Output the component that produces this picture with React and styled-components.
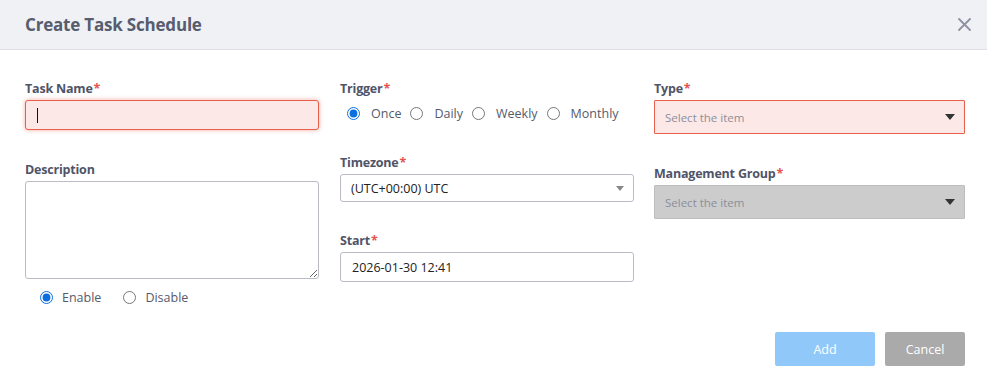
import React from "react";
import styled, { createGlobalStyle } from "styled-components";

const GlobalStyle = createGlobalStyle`
  html, body {
    margin: 0;
    padding: 0;
    background: #ffffff;
  }
  body {
    font-family: "Open Sans", "Noto Sans", "Liberation Sans", sans-serif;
    color: #333;
  }
`;

const Dialog = styled.div`
  width: 987px;
  height: 380px;
  background: #fff;
  display: flex;
  flex-direction: column;
`;

const Header = styled.div`
  height: 50px;
  box-sizing: border-box;
  padding: 0 15px 0 25px;
  background: #eff1f5;
  border-bottom: 1px solid #dfe1e6;
  display: flex;
  align-items: center;
  justify-content: space-between;
`;

const Title = styled.h2`
  margin: 0;
  font-size: 17px;
  font-weight: 700;
  color: #575c6e;
  letter-spacing: -0.2px;
`;

const CloseButton = styled.button`
  border: 0;
  background: none;
  padding: 0;
  width: 16px;
  height: 16px;
  display: flex;
  align-items: center;
  justify-content: center;
  cursor: pointer;
`;

const Body = styled.div`
  padding: 31px 22px 0 25px;
  display: grid;
  grid-template-columns: 315px 314px 311px;
  align-items: start;
`;

const Column = styled.div`
  display: flex;
  flex-direction: column;
  padding-right: ${(p) => p.$pr || 0}px;
`;

const Label = styled.label`
  display: block;
  font-size: 12.5px;
  line-height: 16px;
  font-weight: 700;
  color: #4f5468;
  margin-top: ${(p) => p.$mt || 0}px;
  margin-bottom: 3px;
  letter-spacing: -0.2px;
`;

const Req = styled.span`
  color: #e5534b;
  margin-left: 1px;
`;

const TextBox = styled.div`
  box-sizing: border-box;
  height: ${(p) => p.$h}px;
  border: 1px solid ${(p) => (p.$invalid ? "#e8604c" : "#b9bcc4")};
  border-radius: 3px;
  background: ${(p) => (p.$invalid ? "#fde8e8" : "#fff")};
  box-shadow: ${(p) => (p.$invalid ? "0 0 4px rgba(232, 96, 76, 0.55)" : "none")};
  padding: 0 11px;
  display: flex;
  align-items: center;
  font-size: 12.5px;
  color: #222;
`;

const Caret = styled.span`
  width: 1px;
  height: 15px;
  background: #111;
`;

const TextArea = styled.textarea`
  box-sizing: border-box;
  width: 100%;
  height: 98px;
  border: 1px solid #b9bcc4;
  border-radius: 3px;
  margin: 0;
  font-family: inherit;
  display: block;
`;

const SelectBox = styled.div`
  box-sizing: border-box;
  height: ${(p) => p.$h}px;
  border: 1px solid ${(p) => p.$border};
  border-radius: ${(p) => p.$radius}px;
  background: ${(p) => p.$bg};
  padding: 0 9px 0 10px;
  display: flex;
  align-items: center;
  justify-content: space-between;
  font-size: ${(p) => (p.$placeholder ? "11.5px" : "12.5px")};
  color: ${(p) => (p.$placeholder ? "#8b8f9b" : "#222")};
`;

const Arrow = styled.span`
  width: 0;
  height: 0;
  border-left: ${(p) => p.$size}px solid transparent;
  border-right: ${(p) => p.$size}px solid transparent;
  border-top: ${(p) => p.$size + 1}px solid ${(p) => p.$color};
`;

const RadioRow = styled.div`
  display: flex;
  align-items: center;
  height: 18px;
  margin-top: ${(p) => p.$mt || 0}px;
  padding-left: ${(p) => p.$pl || 0}px;
  gap: ${(p) => p.$gap}px;
`;

const RadioItem = styled.label`
  display: flex;
  align-items: center;
  font-size: 12.5px;
  color: #555a6b;
  gap: ${(p) => p.$gap}px;

  input {
    margin: 0;
    width: 13px;
    height: 13px;
    accent-color: #0b6fe0;
  }
`;

const Footer = styled.div`
  margin-top: auto;
  padding: 0 22px 14px 0;
  display: flex;
  justify-content: flex-end;
  gap: 10px;
`;

const Button = styled.button`
  width: ${(p) => p.$w}px;
  height: 34px;
  border: 0;
  border-radius: 2px;
  background: ${(p) => p.$bg};
  color: #fff;
  font-family: inherit;
  font-size: 12.5px;
  cursor: pointer;
`;

const Radio = ({ name, label, checked, gap = 10 }) => (
  <RadioItem $gap={gap}>
    <input type="radio" name={name} defaultChecked={checked} />
    {label}
  </RadioItem>
);

export default function App() {
  return (
    <>
      <GlobalStyle />
      <Dialog>
        <Header>
          <Title>Create Task Schedule</Title>
          <CloseButton aria-label="Close">
            <svg width="13" height="13" viewBox="0 0 13 13">
              <path d="M1 1L12 12M12 1L1 12" stroke="#8c91a3" strokeWidth="1.8" strokeLinecap="round" />
            </svg>
          </CloseButton>
        </Header>

        <Body>
          <Column $pr={21}>
            <Label>
              Task Name<Req>*</Req>
            </Label>
            <TextBox $h={30} $invalid>
              <Caret />
            </TextBox>
            <Label $mt={32}>Description</Label>
            <TextArea />
            <RadioRow $mt={9} $pl={15} $gap={22}>
              <Radio name="status" label="Enable" checked gap={9} />
              <Radio name="status" label="Disable" gap={9} />
            </RadioRow>
          </Column>

          <Column $pr={20}>
            <Label>
              Trigger<Req>*</Req>
            </Label>
            <RadioRow $mt={4} $pl={7} $gap={9}>
              <Radio name="trigger" label="Once" checked gap={11} />
              <Radio name="trigger" label="Daily" gap={11} />
              <Radio name="trigger" label="Weekly" gap={11} />
              <Radio name="trigger" label="Monthly" gap={11} />
            </RadioRow>
            <Label $mt={33}>
              Timezone<Req>*</Req>
            </Label>
            <SelectBox $h={28} $bg="#fff" $border="#b9bcc4" $radius={3}>
              (UTC+00:00) UTC
              <Arrow $size={4} $color="#888" />
            </SelectBox>
            <Label $mt={31}>
              Start<Req>*</Req>
            </Label>
            <TextBox $h={30}>2026-01-30 12:41</TextBox>
          </Column>

          <Column>
            <Label>
              Type<Req>*</Req>
            </Label>
            <SelectBox $h={34} $bg="#fde8e8" $border="#e8604c" $radius={1} $placeholder>
              Select the item
              <Arrow $size={5} $color="#333" />
            </SelectBox>
            <Label $mt={32}>
              Management Group<Req>*</Req>
            </Label>
            <SelectBox $h={34} $bg="#cccccc" $border="#bdbdbd" $radius={1} $placeholder>
              Select the item
              <Arrow $size={5} $color="#333" />
            </SelectBox>
          </Column>
        </Body>

        <Footer>
          <Button $w={100} $bg="#90c9f9">Add</Button>
          <Button $w={80} $bg="#aaaaaa">Cancel</Button>
        </Footer>
      </Dialog>
    </>
  );
}
